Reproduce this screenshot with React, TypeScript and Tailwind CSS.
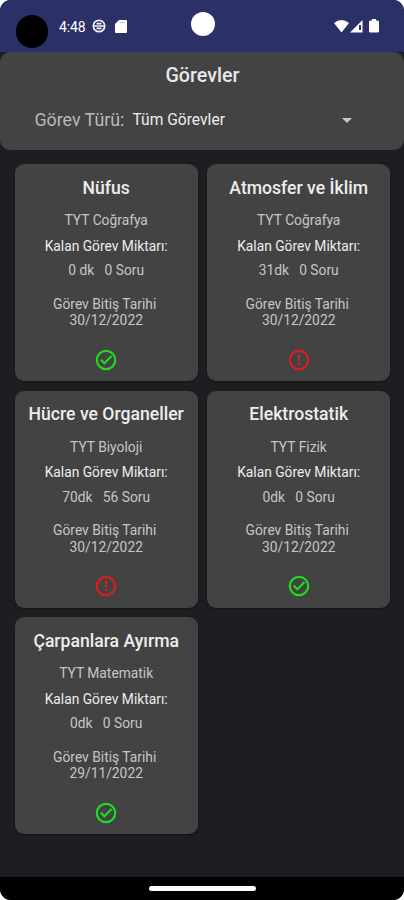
import React from "react";

type Task = { title: string; lesson: string; left: string; date: string; done: boolean };

const tasks: Task[] = [
  { title: "Nüfus", lesson: "TYT Coğrafya", left: "0 dk\u00a0\u00a0 0 Soru", date: "30/12/2022", done: true },
  { title: "Atmosfer ve İklim", lesson: "TYT Coğrafya", left: "31dk\u00a0\u00a0 0 Soru", date: "30/12/2022", done: false },
  { title: "Hücre ve Organeller", lesson: "TYT Biyoloji", left: "70dk\u00a0\u00a0 56 Soru", date: "30/12/2022", done: false },
  { title: "Elektrostatik", lesson: "TYT Fizik", left: "0dk\u00a0\u00a0 0 Soru", date: "30/12/2022", done: true },
  { title: "Çarpanlara Ayırma", lesson: "TYT Matematik", left: "0dk\u00a0\u00a0 0 Soru", date: "29/11/2022", done: true },
];

function StatusIcon({ done }: { done: boolean }) {
  return (
    <svg viewBox="0 0 24 24" className="h-[24px] w-[24px]" fill="none" stroke={done ? "#1fdc22" : "#d81e1e"} strokeWidth="2.2">
      <circle cx="12" cy="12" r="9.2" />
      {done ? <path d="M6.8 11.6l3.6 3.6 7.2-7.2" /> : <path d="M12 6.8v6.2M12 14.8v2.2" />}
    </svg>
  );
}

function Card({ task }: { task: Task }) {
  return (
    <article className="flex h-[217px] flex-col items-center whitespace-nowrap rounded-[9px] bg-[#434343] pt-[12.3px] text-[13.8px] leading-[16px] text-[#c6c6c6] shadow-[0_1px_2px_rgba(0,0,0,0.4)]">
      <h2 className="text-[17.6px] font-medium leading-[22px] text-[#ededed]">{task.title}</h2>
      <p className="mt-[13.7px]">{task.lesson}</p>
      <p className="mt-[9.5px] text-[#ededed]">Kalan Görev Miktarı:</p>
      <p className="mt-[8.5px]">{task.left}</p>
      <p className="mt-[17.5px] pr-[3px]">Görev Bitiş Tarihi</p>
      <p className="mt-[0.5px]">{task.date}</p>
      <div className="mt-[19.7px]">
        <StatusIcon done={task.done} />
      </div>
    </article>
  );
}

export default function App() {
  return (
    <div className="h-[900px] w-[404px] overflow-hidden bg-white font-['Roboto',sans-serif]">
      <div className="flex h-full flex-col overflow-hidden rounded-[11px] bg-[#1e1d21]">
        <div className="flex h-[51.5px] shrink-0 items-start bg-[#2b3066] text-white">
          <div className="ml-[16px] mt-[15px] h-[33px] w-[32px] rounded-full bg-black" />
          <span className="ml-[11px] mt-[18px] w-[28px] text-[14px] leading-[18px] tracking-[-0.1px]">4:48</span>
          <svg viewBox="0 0 14 14" className="ml-[5px] mt-[19px] h-[14px] w-[14px]" fill="none" stroke="#f0f0f5" strokeWidth="1.7">
            <circle cx="7" cy="7" r="5.7" />
            <path d="M1 7h12M4.5 4.6h5M4.5 9.4h5" />
          </svg>
          <svg viewBox="0 0 12 13" className="ml-[9px] mt-[19.5px] h-[13px] w-[12px]" fill="#fff">
            <path d="M4 0h7q1 0 1 1v11q0 1-1 1H1q-1 0-1-1V4z" />
            <path d="M4.5 2.5h5" stroke="#c4c6db" strokeWidth="1" />
          </svg>
          <div className="ml-[64px] mt-[12px] h-[24px] w-[24px] rounded-full bg-white" />
          <svg viewBox="0 0 15 13" className="ml-[119px] mt-[20px] h-[13px] w-[15px]" fill="#fff">
            <path d="M0 3Q7.5-3 15 3L7.5 12.5z" />
          </svg>
          <svg viewBox="0 0 13 13" className="ml-[1px] mt-[20px] h-[13px] w-[13px]" fill="#fff">
            <path d="M12.5 0v12.5H0z" />
            <path d="M9 5h2v5H9z" fill="#2b3066" />
          </svg>
          <svg viewBox="0 0 10 14" className="ml-[5.5px] mt-[19px] h-[14px] w-[10px]" fill="#fff">
            <path d="M3 0h4v1.5h1.5Q10 1.5 10 3v9q0 1.5-1.5 1.5h-7Q0 13.5 0 12V3q0-1.5 1.5-1.5H3z" />
          </svg>
        </div>
        <header className="h-[98.5px] shrink-0 rounded-[10px] bg-[#434343] pt-[12px]">
          <h1 className="pl-[1px] text-center text-[19.7px] font-medium leading-[24px] text-[#e8e8e8]">Görevler</h1>
          <div className="mt-[22px] flex h-[22px] items-center pl-[34.5px]">
            <span className="w-[98px] text-[17.8px] text-[#b9b9b9]">Görev Türü:</span>
            <span className="w-[209px] text-[15.6px] text-[#ededed]">Tüm Görevler</span>
            <svg viewBox="0 0 10 5" className="h-[5px] w-[10px]" fill="#c9c9c9">
              <path d="M0 0h10L5 5z" />
            </svg>
          </div>
        </header>
        <main className="grid flex-1 grid-cols-[183px_183px] content-start gap-x-[9.5px] gap-y-[9.5px] pl-[14.7px] pt-[14.3px]">
          {tasks.map((t) => (
            <Card key={t.title} task={t} />
          ))}
        </main>
        <footer className="flex h-[23px] shrink-0 justify-center bg-black pt-[9px]">
          <div className="h-[5px] w-[107px] rounded-full bg-white" />
        </footer>
      </div>
    </div>
  );
}
